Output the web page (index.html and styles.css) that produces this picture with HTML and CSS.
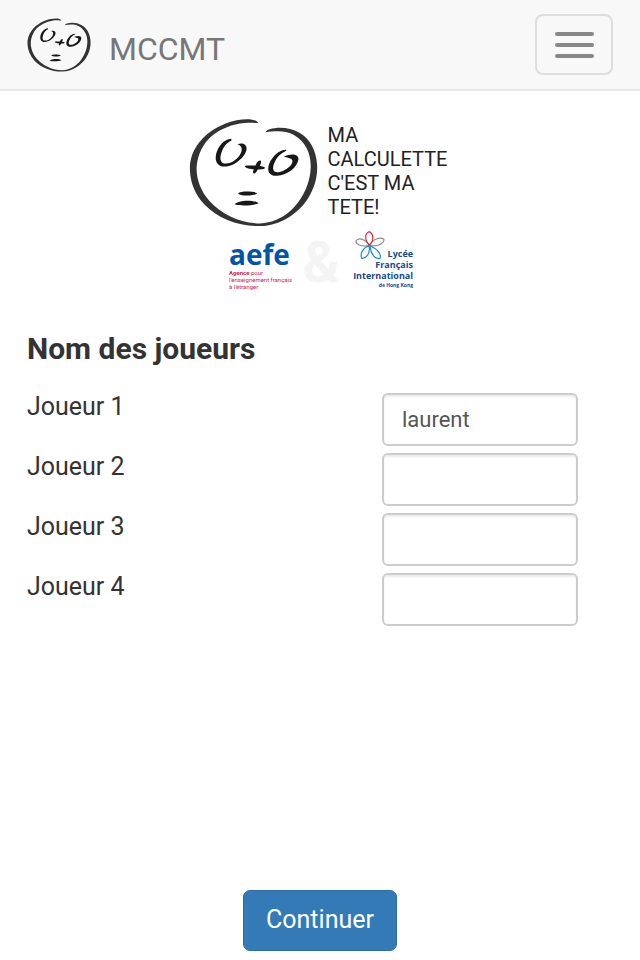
FILE: index.html
```html
<!DOCTYPE html>
<html lang="fr">
<head>
<meta charset="utf-8">
<meta name="viewport" content="width=device-width, initial-scale=1">
<title>MCCMT</title>
<link rel="stylesheet" href="styles.css">
</head>
<body>
<svg class="sprite" aria-hidden="true">
  <symbol id="face" viewBox="22 24 390 328">
    <path fill="#333" d="M231 38C226 26 196 24 166 30C125 38 80 62 52 98C32 124 23 152 25 184C27 222 42 256 68 284C110 328 172 351 238 350C296 348 352 314 383 264C402 234 412 198 409 162C406 122 388 86 356 68C328 51 292 49 266 57C259 59 255 62 254 66C276 65 308 58 338 74C374 94 391 130 390 172C389 208 376 246 352 278C326 314 286 340 237 342C176 342 120 314 82 272C58 244 44 208 45 174C46 144 58 112 80 88C106 62 140 46 176 40C196 36 216 39 231 38Z"/>
    <path fill="#171717" d="M150 86C127 88 110 109 104 132C99 156 109 172 134 170C163 167 194 139 196 117C197 103 183 97 169 103C182 107 184 117 179 128C172 146 151 160 134 161C115 161 114 144 121 125C127 108 139 96 150 92Z"/>
    <path fill="#171717" d="M316 119C296 118 273 138 264 163C257 185 265 199 288 198C321 196 350 171 353 148C354 133 333 129 308 140C317 143 330 145 334 150C340 164 310 187 289 187C275 187 273 174 281 157C288 140 301 129 316 122Z"/>
    <path fill="#171717" d="M190 168C201 166 213 167 223 167C226 159 231 151 238 152C242 155 239 161 236 168C243 169 251 171 252 174C251 179 238 179 230 179C226 187 222 193 217 190C214 187 216 183 218 178C207 177 193 175 190 168Z"/>
    <path fill="#171717" d="M170 252C178 243 216 245 228 250C225 259 182 261 170 252ZM160 284C172 270 219 270 232 281C220 288 174 290 160 284Z"/>
  </symbol>
</svg>

<header class="navbar">
  <a class="brand" href="#">
    <svg class="brand-face" aria-hidden="true"><use href="#face"/></svg>
    <span>MCCMT</span>
  </a>
  <button class="toggle" type="button" aria-label="Menu">
    <span class="bar"></span>
    <span class="bar"></span>
    <span class="bar"></span>
  </button>
</header>

<main class="page">
  <section class="logos">
    <div class="title-logo">
      <svg class="title-face" aria-hidden="true"><use href="#face"/></svg>
      <p class="slogan">MA<br>CALCULETTE<br>C'EST MA<br>TETE!</p>
    </div>
    <div class="partners">
      <div class="aefe">
        <strong class="aefe-name">aefe</strong>
        <p class="aefe-text"><b>Agence</b> pour<br>l'enseignement français<br>à l'étranger</p>
      </div>
      <span class="amp">&amp;</span>
      <div class="lycee">
        <svg class="flower" viewBox="0 0 90 90" fill="none" stroke-width="3.5" stroke-linejoin="round" aria-hidden="true">
          <path stroke="#8b8b8b" d="M43 43C30 23 13 20 4 28C0 39 18 49 43 43Z"/>
          <path stroke="#8b8b8b" d="M45 43C53 24 74 17 87 25C88 36 67 49 45 43Z"/>
          <path stroke="#e3202c" d="M43 42C27 26 30 7 42 2C55 7 59 27 43 42Z"/>
          <path stroke="#1686cc" d="M42 45C24 49 15 67 20 82C34 83 47 67 42 45Z"/>
          <path stroke="#1686cc" d="M45 45C64 52 80 67 75 82C60 87 47 68 45 45Z"/>
        </svg>
        <p class="lycee-text">Lycée<br>Français<br>International</p>
        <p class="lycee-city">de Hong Kong</p>
      </div>
    </div>
  </section>

  <form class="players">
    <h1>Nom des joueurs</h1>
    <div class="row"><label for="j1">Joueur 1</label><input id="j1" type="text" value="laurent"></div>
    <div class="row"><label for="j2">Joueur 2</label><input id="j2" type="text"></div>
    <div class="row"><label for="j3">Joueur 3</label><input id="j3" type="text"></div>
    <div class="row"><label for="j4">Joueur 4</label><input id="j4" type="text"></div>
    <button class="submit" type="submit">Continuer</button>
  </form>
</main>
</body>
</html>
```
FILE: styles.css
```css
* {
  box-sizing: border-box;
}

body {
  margin: 0;
  min-height: 100vh;
  display: flex;
  flex-direction: column;
  background: #fff;
  color: #333;
  font-family: Roboto, sans-serif;
  font-size: 25px;
  line-height: 36px;
}

p,
h1 {
  margin: 0;
}

.sprite {
  position: absolute;
  width: 0;
  height: 0;
}

.navbar {
  display: flex;
  align-items: center;
  justify-content: space-between;
  padding: 14px 27px;
  background: #f8f8f8;
  border-bottom: 2px solid #e7e7e7;
}

.brand {
  display: flex;
  align-items: center;
  gap: 18px;
  color: #777;
  font-size: 32px;
  text-decoration: none;
}

.brand span {
  padding-top: 8px;
}

.brand-face {
  width: 64px;
  height: 54px;
}

.toggle {
  display: flex;
  flex-direction: column;
  align-items: center;
  justify-content: center;
  gap: 7px;
  width: 78px;
  height: 61px;
  padding: 0;
  background: transparent;
  border: 2px solid #ddd;
  border-radius: 8px;
}

.bar {
  width: 39px;
  height: 4px;
  border-radius: 2px;
  background: #888;
}

.page {
  flex: 1;
  display: flex;
  flex-direction: column;
  padding: 27px 27px 9px;
}

.logos {
  display: flex;
  flex-direction: column;
  align-items: center;
  height: 206px;
}

.title-logo {
  display: flex;
  gap: 10px;
  padding-right: 4px;
}

.title-face {
  width: 129px;
  height: 109px;
}

.slogan {
  padding-top: 5px;
  color: #222;
  font-size: 20px;
  line-height: 24px;
}

.partners {
  display: flex;
  align-items: flex-start;
  gap: 13px;
  padding: 4px 0 0 2px;
  font-family: "Open Sans", sans-serif;
}

.aefe {
  width: 60px;
  padding-top: 8px;
  white-space: nowrap;
}

.aefe-name {
  display: block;
  color: #0454a4;
  font-size: 28px;
  line-height: 30px;
}

.aefe-text {
  color: #d5164a;
  font-family: Roboto, sans-serif;
  font-size: 6px;
  line-height: 7px;
}

.amp {
  color: #f4f4f4;
  font-family: Roboto, sans-serif;
  font-size: 58px;
  font-weight: 700;
  line-height: 62px;
}

.lycee {
  position: relative;
  color: #164a8c;
  font-weight: 700;
  text-align: right;
}

.flower {
  position: absolute;
  top: 0;
  left: 2px;
  width: 30px;
  height: 30px;
}

.lycee-text {
  padding-top: 17px;
  font-size: 9px;
  line-height: 11px;
}

.lycee-city {
  font-size: 5px;
  line-height: 9px;
}

.players {
  flex: 1;
  display: flex;
  flex-direction: column;
  gap: 7px;
}

h1 {
  margin-bottom: 19px;
  padding-top: 7px;
  font-size: 30px;
  font-weight: 700;
  line-height: 36px;
}

.row {
  display: grid;
  grid-template-columns: 355px 1fr;
  align-items: start;
}

label {
  line-height: 28px;
}

.row input {
  width: 196px;
  height: 53px;
  padding: 0 18px;
  background: #fff;
  border: 2px solid #ccc;
  border-radius: 6px;
  box-shadow: inset 0 2px 2px rgba(0, 0, 0, 0.075);
  color: #555;
  font: inherit;
  font-size: 22px;
}

.submit {
  align-self: center;
  height: 61px;
  margin-top: auto;
  padding: 0 22px 2px;
  background: #337ab7;
  border: 1px solid #2e6da4;
  border-radius: 7px;
  color: #fff;
  font: inherit;
}
```
